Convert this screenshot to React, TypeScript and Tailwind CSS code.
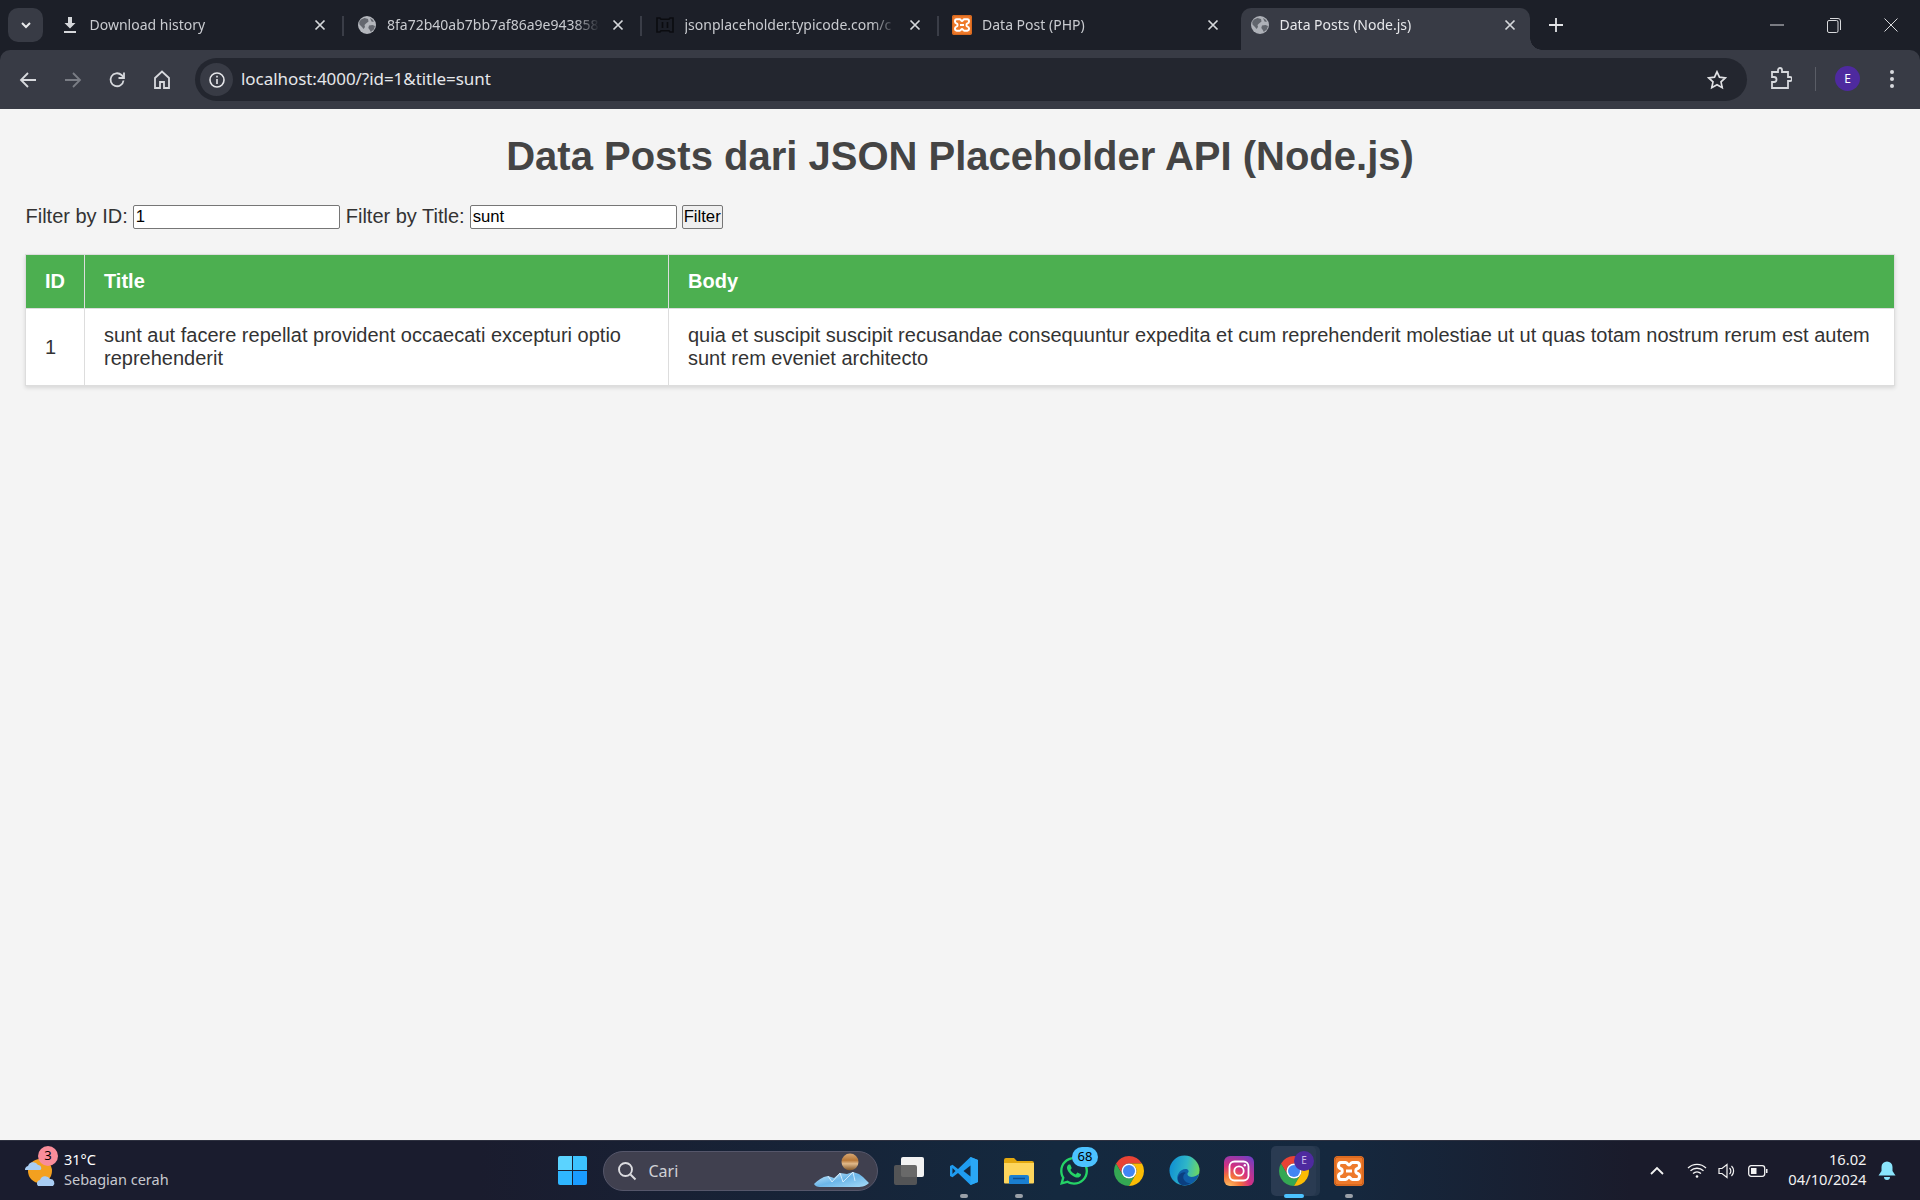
import React from "react";
import { FaWhatsapp } from "react-icons/fa";

const Globe = ({ c = "#b4b7bd" }: { c?: string }) => (
  <svg width="18" height="18" viewBox="0 0 18 18" className="shrink-0">
    <circle cx="9" cy="9" r="9" fill={c} />
    <path d="M3 3.500 6.500 2 10 3l.5 2.500L8 7.500 6.500 9 7 11 5.500 13 4 11 1.500 8.500 1.200 6zM11 9.500l3.500-.5 2.500 1-1.200 3.500-3 2.500-1-2-1.500-2zM12 2l3 2 .8 2-2.300-.5z" fill="#23262f" fillOpacity="0.55" />
  </svg>
);

const Xampp = ({ size = 18, blur = false }: { size?: number; blur?: boolean }) => (
  <svg width={size} height={size} viewBox="0 0 30 30" className="shrink-0">
    <rect width="30" height="30" rx={blur ? 4 : 3} fill="#ee7a2b" />
    <rect x="1" y="1" width="28" height="28" rx="3" fill="none" stroke="#c65b17" strokeWidth="1" />
    <path d="M7 6.500h4.500c2 0 2 2.500 3.500 2.500s1.500-2.500 3.500-2.500H23c2 0 2.500 2 2.500 3.500s-1.500 2.500-3 3c-1 .4-1 3.600 0 4 1.500.5 3 1.500 3 3s-.5 3.500-2.500 3.500h-4.500c-2 0-2-2.500-3.500-2.500s-1.500 2.500-3.500 2.500H7c-2 0-2.500-2-2.500-3.500s1.500-2.500 3-3c1-.4 1-3.600 0-4-1.500-.5-3-1.500-3-3S5 6.500 7 6.500Z" fill="none" stroke="#fff" strokeWidth="3" />
    <path d="M12 13.500h6v3h-6z" fill="#fff" />
  </svg>
);

const Typicode = () => (
  <svg width="20" height="20" viewBox="0 0 20 20" className="shrink-0" fill="none" stroke="#0b0c10" strokeWidth="1.600">
    <path d="M2 3h3l1 1.200h8L15 3h3v14h-3l-1-1.200H6L5 17H2z" />
    <path d="M7.500 7v6M12.500 7v6" />
  </svg>
);

const CloseX = ({ c = "#d5d7db" }: { c?: string }) => (
  <svg width="12" height="12" viewBox="0 0 12 12" className="shrink-0">
    <path d="M1.500 1.500l9 9M10.500 1.500l-9 9" stroke={c} strokeWidth="1.700" />
  </svg>
);

function Tab({ icon, title, active, sep }: { icon: React.ReactNode; title: string; active?: boolean; sep?: boolean }) {
  return (
    <div className="relative w-[297.5px] h-[42px] shrink-0 px-[4px]">
      <div className={`h-full flex items-center pl-[10px] pr-[14px] pb-[8px] rounded-t-[10px] ${active ? "bg-[#383b45]" : ""}`}>
        <span className="w-[18px] flex justify-center shrink-0">{icon}</span>
        <span
          className={`ml-[11px] flex-1 overflow-hidden whitespace-nowrap text-[14px] leading-[20px] ${active ? "text-[#e6e7ea]" : "text-[#c9cbd0]"}`}
          style={{ maskImage: "linear-gradient(to right, black 88%, transparent 100%)" }}
        >
          {title}
        </span>
        <span className="ml-[12px] flex"><CloseX /></span>
      </div>
      {sep && <span className="absolute right-0 top-[8px] h-[20px] w-[2px] bg-[#3a3d47]" />}
      {active && (
        <span className="absolute right-[-8px] bottom-0 w-[12px] h-[12px] bg-[radial-gradient(circle_at_100%_0,#1c1f28_11.5px,#383b45_12px)]" />
      )}
    </div>
  );
}

function ChromeLogo({ size = 30 }: { size?: number }) {
  return (
    <svg width={size} height={size} viewBox="4 4 40 40">
      <path d="M6.680 14A20 20 0 0 1 41.320 14H24A10 10 0 0 0 15.340 29z" fill="#e94335" />
      <path d="M6.680 14L15.340 29A10 10 0 0 0 32.660 29L24 44A20 20 0 0 1 6.680 14z" fill="#34a853" />
      <path d="M41.320 14H24A10 10 0 0 1 32.660 29L24 44A20 20 0 0 0 41.320 14z" fill="#fbbc05" />
      <circle cx="24" cy="24" r="10" fill="#fff" />
      <circle cx="24" cy="24" r="8" fill="#4285f4" />
    </svg>
  );
}

function VSCode() {
  return (
    <svg width="30" height="30" viewBox="0 0 30 30">
      <path d="M21.500 1 9 13 3.500 8.800 1 10v10l2.500 1.200L9 17l12.500 12L29 26V4z" fill="#1f9cf0" />
      <path d="M21.500 1 29 4v22l-7.500 3z" fill="#2aa7f5" />
      <path d="M21.500 9.500 14.500 15l7 5.500z" fill="#15283e" />
      <path d="M3.500 12l-.1 6L6.500 15z" fill="#15283e" />
    </svg>
  );
}

function Edge() {
  return (
    <svg width="31" height="31" viewBox="0 0 32 32">
      <defs>
        <linearGradient id="edgeA" x1="0" y1="0.300" x2="1" y2="0.500">
          <stop offset="0" stopColor="#0f8fd3" />
          <stop offset="0.550" stopColor="#2fb6c8" />
          <stop offset="1" stopColor="#6fd85f" />
        </linearGradient>
      </defs>
      <circle cx="16" cy="16" r="15.500" fill="url(#edgeA)" />
      <path d="M31 19c-1 7-8 12.500-14.500 12.500C9 31.500 7 24 9.500 19.500 12 15 18 13 20 16c1 1.500-1 2-1 3.500 0 2 3 3.500 6 3 2.500-.5 5-2 6-3.500z" fill="#0f5ea8" />
      <path d="M13.500 31C9 29 8 24 10.500 20.500 12.500 18 16 17 17.500 18.500c-2.500 1-3.500 4-2 7 1 2 3.500 3.500 6.500 3.500-2.500 2-6 2.500-8.500 2z" fill="#0b3f80" />
    </svg>
  );
}

function Instagram() {
  return (
    <svg width="30" height="30" viewBox="0 0 30 30">
      <defs>
        <radialGradient id="ig" cx="0.150" cy="1.050" r="1.300">
          <stop offset="0" stopColor="#fdc468" />
          <stop offset="0.300" stopColor="#f5743a" />
          <stop offset="0.550" stopColor="#d6307f" />
          <stop offset="1" stopColor="#6a3fc9" />
        </radialGradient>
      </defs>
      <rect width="30" height="30" rx="6" fill="url(#ig)" />
      <rect x="5.500" y="5.500" width="19" height="19" rx="5" fill="none" stroke="#fff" strokeWidth="1.800" />
      <circle cx="15" cy="15" r="4.700" fill="none" stroke="#fff" strokeWidth="1.800" />
      <circle cx="20.800" cy="9.200" r="1.200" fill="#fff" />
    </svg>
  );
}

function Folder() {
  return (
    <svg width="30" height="28" viewBox="0 0 30 28">
      <path d="M0 3a2 2 0 0 1 2-2h8l3 3h15a2 2 0 0 1 2 2v4H0z" fill="#e3a80f" />
      <path d="M0 6h30v19.500a1 1 0 0 1-1 1H1a1 1 0 0 1-1-1z" fill="#fdd55d" />
      <path d="M5 27v-7a2 2 0 0 1 2-2h16a2 2 0 0 1 2 2v7z" fill="#1a7fd1" />
      <path d="M9 21.500h12" stroke="#0d4f92" strokeWidth="1.500" />
    </svg>
  );
}

function Weather() {
  return (
    <svg width="34" height="34" viewBox="0 0 34 34">
      <circle cx="16" cy="17" r="12" fill="#f3a01f" />
      <path d="M1 16a4 4 0 0 1 3-4 5.500 5.500 0 0 1 10-1 3 3 0 0 1 2.500 5z" fill="#a9cdf3" />
      <path d="M14 32a3.500 3.500 0 0 1 2-6 5.500 5.500 0 0 1 10-1 4 4 0 0 1 3 7z" fill="#a9cdf3" />
    </svg>
  );
}

function SearchArt() {
  return (
    <svg width="60" height="36" viewBox="0 0 60 36">
      <defs>
        <linearGradient id="jup" x1="0" y1="0" x2="0" y2="1">
          <stop offset="0" stopColor="#d9a873" />
          <stop offset="0.400" stopColor="#b87838" />
          <stop offset="0.600" stopColor="#e0b98a" />
          <stop offset="1" stopColor="#7b5228" />
        </linearGradient>
        <linearGradient id="ice" x1="0" y1="0" x2="1" y2="1">
          <stop offset="0" stopColor="#d2efff" />
          <stop offset="0.500" stopColor="#6cb6e8" />
          <stop offset="1" stopColor="#a7dcf7" />
        </linearGradient>
      </defs>
      <circle cx="38" cy="9" r="8.500" fill="url(#jup)" />
      <path d="M2 31c4-4 8-7 14-8l6 2 6-5 7 1 6-2 6 2 4 3 6 6c-4 4-8 4-14 4H8c-3 0-5-1-6-3z" fill="url(#ice)" />
      <path d="M16 23l4 6 8-9 3 9 10-10 2 9" fill="none" stroke="#e6f6ff" strokeWidth="0.800" />
    </svg>
  );
}

const TaskIcon = ({ children, dot, active }: { children: React.ReactNode; dot?: boolean; active?: boolean }) => (
  <div className="relative w-[55px] h-[60px] flex items-center justify-center shrink-0">
    {active && (
      <>
        <span className="absolute left-[6px] right-[2px] top-[5px] bottom-[5px] rounded-[5px] bg-[#24364c]" />
        <span className="absolute left-[4px] right-[6px] top-[5px] bottom-[5px] rounded-[5px] bg-[#2a3b52]" />
      </>
    )}
    <span className="relative flex">{children}</span>
    {dot && <span className="absolute bottom-[3px] left-1/2 -translate-x-1/2 w-[8px] h-[4px] rounded-full bg-[#9aa0a8]" />}
    {active && <span className="absolute bottom-[3px] left-1/2 -translate-x-1/2 w-[20px] h-[4px] rounded-full bg-[#4cc2ff]" />}
  </div>
);

export default function App() {
  const ui = { fontFamily: '"Noto Sans", "Open Sans", sans-serif' };
  return (
    <div className="w-[1920px] h-[1200px] flex flex-col overflow-hidden bg-[#f4f4f4]" style={ui}>
      {/* Tab strip */}
      <div className="h-[50px] shrink-0 bg-[#1c1f28] flex items-start">
        <div className="ml-[8px] mt-[8px] w-[35px] h-[34px] rounded-[10px] bg-[#383b45] flex items-center justify-center shrink-0">
          <svg width="12" height="12" viewBox="0 0 12 12" fill="none" stroke="#e8e9eb" strokeWidth="2"><path d="M2 4l4 4 4-4" /></svg>
        </div>
        <div className="ml-[3.5px] mt-[8px] flex">
          <Tab
            sep
            title="Download history"
            icon={
              <svg width="16" height="18" viewBox="0 0 16 18" fill="#d5d7db"><path d="M6 1h4v6h3.500L8 12.500 2.500 7H6zM2 15h12v2H2z" /></svg>
            }
          />
          <Tab sep title="8fa72b40ab7bb7af86a9e9438586bcd4" icon={<Globe />} />
          <Tab sep title="jsonplaceholder.typicode.com/c" icon={<Typicode />} />
          <Tab title="Data Post (PHP)" icon={<Xampp size={20} />} />
          <Tab active title="Data Posts (Node.js)" icon={<Globe c="#aeb1b8" />} />
        </div>
        <div className="ml-[14px] mt-[17px] w-[16px] h-[16px] flex items-center justify-center">
          <svg width="14" height="14" viewBox="0 0 14 14" stroke="#e3e4e7" strokeWidth="1.800"><path d="M7 0v14M0 7h14" /></svg>
        </div>
        <div className="ml-auto flex items-center h-[50px] text-white">
          <div className="w-[56px] flex justify-center -translate-x-[1px]">
            <svg width="14" height="2" viewBox="0 0 14 2"><path d="M0 1h14" stroke="#d8d9dc" strokeWidth="1" /></svg>
          </div>
          <div className="w-[57px] flex justify-center -translate-x-[1px]">
            <svg width="14" height="15" viewBox="0 0 14 15" fill="none" stroke="#d8d9dc" strokeWidth="1"><rect x="0.500" y="2.500" width="10.500" height="12" rx="1.500" /><path d="M3 .5h8a2.500 2.500 0 0 1 2.500 2.500v9" /></svg>
          </div>
          <div className="w-[56px] mr-[1px] flex justify-center">
            <svg width="14" height="14" viewBox="0 0 14 14" stroke="#d8d9dc" strokeWidth="1"><path d="M.5.5l13 13M13.500.5l-13 13" /></svg>
          </div>
        </div>
      </div>

      {/* Toolbar */}
      <div className="h-[59px] shrink-0 bg-[#1c1f28]">
        <div className="h-[59px] bg-[#383b45] rounded-t-[10px] flex items-center">
          <div className="w-[195px] flex items-center shrink-0 text-[#d7d9dd]">
            <div className="w-[45px] ml-[5px] flex justify-center">
              <svg width="18" height="18" viewBox="0 0 18 18" fill="none" stroke="#d7d9dd" strokeWidth="1.800"><path d="M17 9H2M9 2 2 9l7 7" /></svg>
            </div>
            <div className="w-[45px] flex justify-center">
              <svg width="18" height="18" viewBox="0 0 18 18" fill="none" stroke="#7a7d85" strokeWidth="1.800"><path d="M1 9h15M9 2l7 7-7 7" /></svg>
            </div>
            <div className="w-[44px] flex justify-center">
              <svg width="18" height="18" viewBox="0 0 18 18" fill="none" stroke="#d7d9dd" strokeWidth="1.800"><path d="M15.500 9.500a6.500 6.500 0 1 1-2-5.500l2 2" /><path d="M16 1.500V7h-5.500" /></svg>
            </div>
            <div className="w-[45px] flex justify-center">
              <svg width="18" height="19" viewBox="0 0 18 19" fill="none" stroke="#d7d9dd" strokeWidth="1.800"><path d="M2 8l7-6.500L16 8v10h-5v-6H7v6H2z" /></svg>
            </div>
          </div>
          <div className="w-[1552px] h-[43px] rounded-full bg-[#23262f] flex items-center pl-[5px] pr-[20px] shrink-0">
            <div className="w-[33px] h-[33px] rounded-full bg-[#383b45] flex items-center justify-center shrink-0">
              <svg width="18" height="18" viewBox="0 0 18 18" fill="none" stroke="#e6e7ea" strokeWidth="1.600"><circle cx="9" cy="9" r="7" /><path d="M9 8v5" /><path d="M9 4.800v1.800" /></svg>
            </div>
            <span className="ml-[8px] text-[17px] leading-[24px] -translate-y-[1px] tracking-[-0.05px] text-[#e6e7ea]">localhost:4000/?id=1&amp;title=sunt</span>
            <svg className="ml-auto" width="20" height="20" viewBox="0 0 20 20" fill="none" stroke="#e0e1e4" strokeWidth="1.700"><path d="M10 1.800l2.500 5.400 5.800.7-4.300 4 1.200 5.800-5.200-2.900-5.200 2.900L6 11.900l-4.300-4 5.800-.7z" /></svg>
          </div>
          <div className="ml-[22.5px] flex items-center -translate-y-[1px]">
            <svg width="22" height="24" viewBox="0 0 22 24" fill="none" stroke="#d7d9dd" strokeWidth="1.800"><path d="M2 5h6V3a2 2 0 0 1 4 0v2h6v5h2a2 2 0 0 1 0 4h-2v7H2v-6h2a2.500 2.500 0 0 0 0-5H2z" /></svg>
            <span className="ml-[23.5px] w-[1px] h-[24px] bg-[#5a5d66]" />
            <span className="ml-[19px] w-[25px] h-[25px] rounded-full bg-[#4e2a9f] text-white text-[12px] flex items-center justify-center">E</span>
            <svg className="ml-[29px]" width="6" height="20" viewBox="0 0 6 20" fill="#d7d9dd"><circle cx="3" cy="3" r="2" /><circle cx="3" cy="10" r="2" /><circle cx="3" cy="17" r="2" /></svg>
          </div>
        </div>
      </div>

      {/* Page */}
      <main className="flex-1 min-h-0 pl-[25px] bg-[#f4f4f4] text-[20px] text-[#333]" style={{ fontFamily: '"Liberation Sans", Arial, sans-serif' }}>
        <h1 className="mt-[24px] w-[1870px] text-center text-[40px] leading-[46px] font-bold text-[#444]">Data Posts dari JSON Placeholder API (Node.js)</h1>
        <form className="mt-[26px] h-[24px] flex items-center text-[20px] leading-[23px]">
          <label className="ml-[0.5px] -translate-y-[1px]">Filter by ID:</label>
          <input
            readOnly
            value="1"
            className="ml-[5px] w-[207px] h-[24px] border border-[#767676] rounded-[2px] bg-white px-[2px] text-[16.7px] text-black outline-none"
          />
          <label className="ml-[6px] -translate-y-[1px]">Filter by Title:</label>
          <input
            readOnly
            value="sunt"
            className="ml-[5px] w-[207px] h-[24px] border border-[#767676] rounded-[2px] bg-white px-[2px] text-[16.7px] text-black outline-none"
          />
          <button type="button" className="ml-[5px] w-[41px] h-[24px] border border-[#767676] rounded-[2px] bg-[#efefef] text-[16.7px] text-black leading-none">Filter</button>
        </form>
        <table className="mt-[25px] w-[1870px] border-collapse table-fixed bg-white leading-[23px] shadow-[0_2px_4px_rgba(0,0,0,0.12)]">
          <colgroup>
            <col className="w-[59px]" />
            <col className="w-[584px]" />
            <col />
          </colgroup>
          <thead>
            <tr className="bg-[#4caf50] text-white font-bold text-left h-[54px]">
              <th className="border border-[#ddd] px-[19px] py-[15px]">ID</th>
              <th className="border border-[#ddd] px-[19px] py-[15px]">Title</th>
              <th className="border border-[#ddd] px-[19px] py-[15px]">Body</th>
            </tr>
          </thead>
          <tbody>
            <tr className="h-[77px]">
              <td className="border border-[#ddd] px-[19px] py-[15px]">1</td>
              <td className="border border-[#ddd] px-[19px] py-[15px]">sunt aut facere repellat provident occaecati excepturi optio reprehenderit</td>
              <td className="border border-[#ddd] px-[19px] py-[15px]">quia et suscipit suscipit recusandae consequuntur expedita et cum reprehenderit molestiae ut ut quas totam nostrum rerum est autem sunt rem eveniet architecto</td>
            </tr>
          </tbody>
        </table>
      </main>

      {/* Taskbar */}
      <footer className="h-[60px] shrink-0 border-t border-[#2e3140] bg-[linear-gradient(90deg,#1a1c2e_0%,#1a1c2e_25%,#14293f_55%,#15283e_70%,#1a1b2b_85%,#1a1b2b_100%)] flex items-center text-white relative">
        <div className="w-[545px] shrink-0 flex items-center pl-[24px]">
          <div className="relative w-[40px] h-[34px] flex items-center">
            <Weather />
            <span className="absolute left-[14px] top-[-8px] w-[20px] h-[20px] rounded-full bg-[#f98d9a] text-[13px] text-black flex items-center justify-center">3</span>
          </div>
          <div className="flex flex-col text-[14.5px] leading-[20px] -translate-y-[2px]">
            <span>31°C</span>
            <span className="text-[#c7c8ce]">Sebagian cerah</span>
          </div>
        </div>
        <div className="w-[55px] flex items-center justify-center shrink-0">
          <div className="grid grid-cols-2 gap-[1px] w-[29px] h-[29px]">
            <span className="rounded-tl-[2px] bg-[#5bd3ff]" />
            <span className="rounded-tr-[2px] bg-[#3cc3ff]" />
            <span className="rounded-bl-[2px] bg-[#2fb6ff]" />
            <span className="rounded-br-[2px] bg-[#1a9cff]" />
          </div>
        </div>
        <div className="ml-[3px] w-[275px] h-[40px] rounded-full bg-[#40404f] border border-[#55566a] flex items-center pl-[13px] overflow-hidden shrink-0">
          <svg width="20" height="20" viewBox="0 0 20 20" fill="none" stroke="#dcdce0" strokeWidth="1.900"><circle cx="8.500" cy="8.500" r="6.500" /><path d="M13.500 13.500l5 5" /></svg>
          <span className="ml-[11.5px] text-[16px] text-[#d0d1d6]">Cari</span>
          <span className="ml-auto mr-[5px] flex"><SearchArt /></span>
        </div>
        <div className="ml-[3.5px] flex items-center">
          <TaskIcon>
            <span className="relative w-[30px] h-[28px] block">
              <span className="absolute right-0 top-0 w-[23px] h-[20px] rounded-[2px] bg-[#f2f2f2]" />
              <span className="absolute left-0 bottom-0 w-[23px] h-[20px] rounded-[2px] bg-[#5a5a5a]/90" />
            </span>
          </TaskIcon>
          <TaskIcon dot><VSCode /></TaskIcon>
          <TaskIcon dot><Folder /></TaskIcon>
          <TaskIcon>
            <FaWhatsapp size={32} color="#25d366" />
            <span className="absolute left-[14px] top-[-8px] w-[26px] h-[20px] rounded-full bg-[#4cc2ff] text-black text-[13px] flex items-center justify-center">68</span>
          </TaskIcon>
          <TaskIcon><ChromeLogo /></TaskIcon>
          <TaskIcon><Edge /></TaskIcon>
          <TaskIcon><Instagram /></TaskIcon>
          <TaskIcon active>
            <ChromeLogo />
            <span className="absolute left-[15px] top-[-5px] w-[20px] h-[20px] rounded-full bg-[#4e2a9f] text-[#c9b9ea] text-[10px] flex items-center justify-center">E</span>
          </TaskIcon>
          <TaskIcon dot><Xampp size={30} blur /></TaskIcon>
        </div>
        <div className="ml-auto flex items-center pr-[24.5px]">
          <svg width="14" height="9" viewBox="0 0 14 9" fill="none" stroke="#f3f3f3" strokeWidth="1.800"><path d="M1 8l6-6 6 6" /></svg>
          <svg className="ml-[22.5px]" width="20" height="15" viewBox="0 0 20 15" fill="none" stroke="#f3f3f3" strokeWidth="1.300"><path d="M1 5a13 13 0 0 1 18 0M3.500 7.800a9.500 9.500 0 0 1 13 0M6 10.500a6 6 0 0 1 8 0" /><circle cx="10" cy="13.500" r="1.300" fill="#f3f3f3" stroke="none" /></svg>
          <svg className="ml-[11.5px]" width="20" height="16" viewBox="0 0 20 16" fill="none" stroke="#f3f3f3" strokeWidth="1.200"><path d="M1 5.500h3L9 1.500v13L4 10.500H1z" /><path d="M11.500 5a4 4 0 0 1 0 6M13.500 3a7 7 0 0 1 0 10" /></svg>
          <svg className="ml-[10px]" width="20" height="12" viewBox="0 0 20 12"><rect x="0.700" y="0.700" width="16" height="10.600" rx="2.500" fill="none" stroke="#f3f3f3" strokeWidth="1.300" /><rect x="3" y="3" width="5.500" height="6" fill="#f3f3f3" /><rect x="18" y="4" width="1.500" height="4" fill="#f3f3f3" /></svg>
          <div className="ml-[20px] flex flex-col items-end text-[14.7px] leading-[20px] text-[#f2f2f2] -translate-y-[2px]">
            <span>16.02</span>
            <span>04/10/2024</span>
          </div>
          <svg className="ml-[11px]" width="18" height="20" viewBox="0 0 18 20" fill="#8ae4fb"><path d="M9 .5a5.500 5.500 0 0 1 5.500 5.500v4l3 4.500H.5l3-4.500V6A5.500 5.500 0 0 1 9 .5z" /><path d="M6 16h6a3 3 0 0 1-6 0z" /></svg>
        </div>
      </footer>
    </div>
  );
}
